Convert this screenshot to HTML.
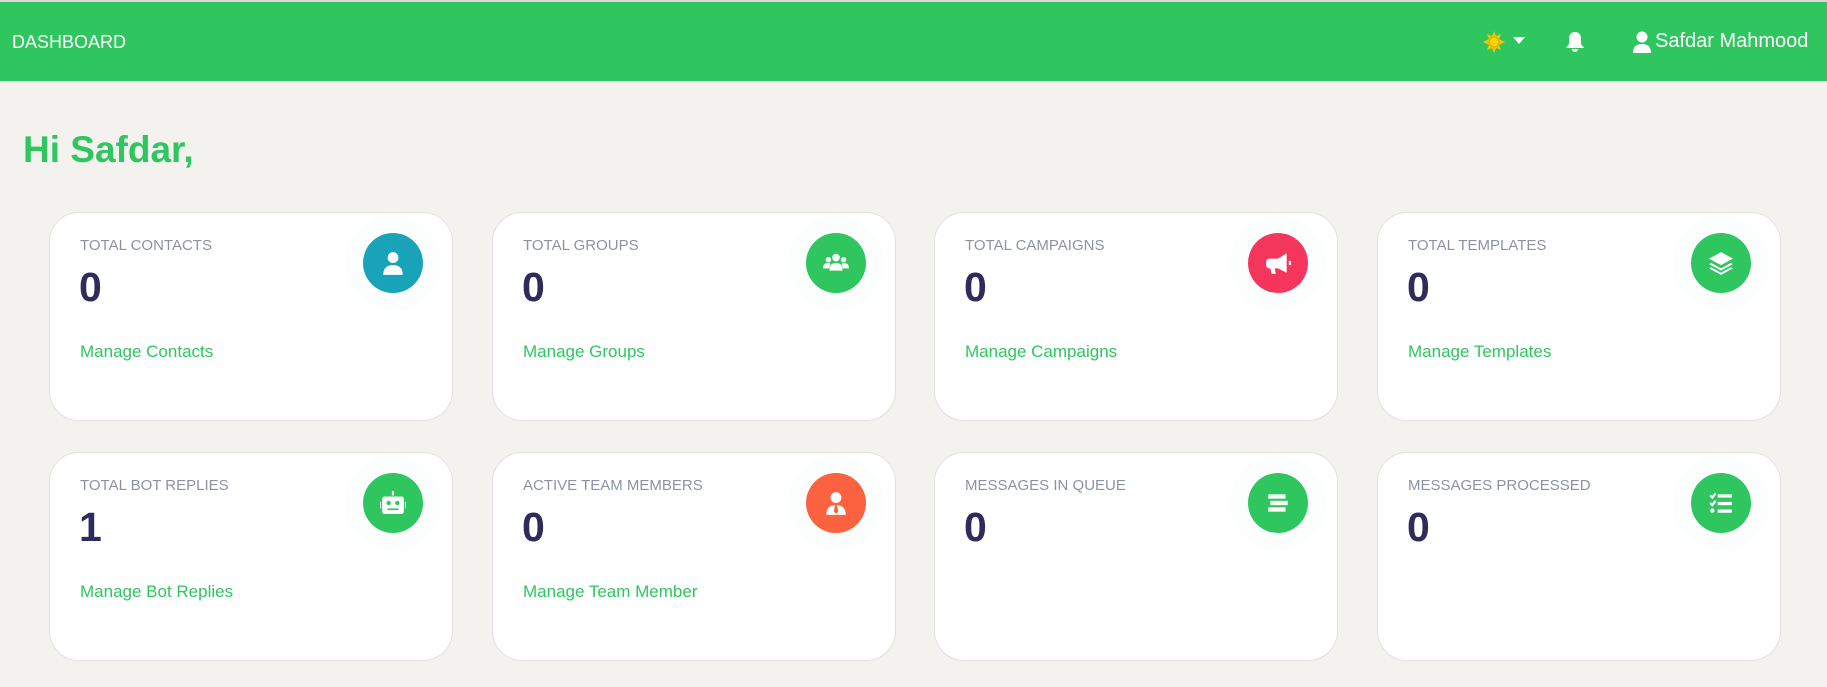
<!DOCTYPE html>
<html><head><meta charset="utf-8"><style>
*{box-sizing:border-box;margin:0;padding:0}
body{width:1827px;height:687px;overflow:hidden;background:#f3f2ef;font-family:"Liberation Sans",sans-serif;position:relative}
.top{position:absolute;left:0;top:0;width:1827px;height:81px;background:#2fc660;border-top:2px solid #d8d8d8}
.dash{position:absolute;left:12px;top:30px;color:#fff;font-size:18px}
.hi{position:absolute;left:23px;top:129px;color:#2fc660;font-size:37px;font-weight:bold}
.card{position:absolute;width:404px;height:209px;background:#fff;border:1px solid #e2e2e2;border-radius:30px}
.lbl{position:absolute;left:30px;top:24px;font-size:15px;color:#8a93a6}
.num{position:absolute;left:29px;top:51px;font-size:41px;font-weight:bold;color:#2e2c5c}
.lnk{position:absolute;left:30px;top:129px;font-size:17px;color:#2fc660}
.ic{position:absolute;left:313px;top:20px;width:60px;height:60px;border-radius:50%;box-shadow:0 0 0 18px rgba(246,248,250,.35);display:flex;align-items:center;justify-content:center}
.ic svg{width:26px;height:26px;fill:#fff}
.r{position:absolute;color:#fff;font-size:20px}
</style></head><body>
<div class="top">
<div class="dash">DASHBOARD</div>
<svg style="position:absolute;left:1482px;top:28px" width="24" height="24" viewBox="0 0 24 24"><polygon points="12,1 14,6 19,4 17,9 23,12 17,15 19,20 14,18 12,23 10,18 5,20 7,15 1,12 7,9 5,4 10,6" fill="#f5c400"/><circle cx="12" cy="12" r="5" fill="#f5d200" stroke="#d9a800"/></svg>
<svg style="position:absolute;left:1513px;top:35px" width="12" height="8"><polygon points="0,0 12,0 6,7" fill="#fff"/></svg>
<svg style="position:absolute;left:1565px;top:29px" width="20" height="22" viewBox="0 0 20 22"><path d="M10 1c-4 0-6 3-6 7v5l-3 4h18l-3-4V8c0-4-2-7-6-7z M7 18a3 3 0 0 0 6 0z" fill="#fff"/></svg>
<svg style="position:absolute;left:1632px;top:29px" width="20" height="22" viewBox="0 0 20 22"><circle cx="10" cy="6" r="5.5" fill="#fff"/><path d="M1 22c0-6 3-9 9-9s9 3 9 9z" fill="#fff"/></svg>
<div class="r" style="left:1655px;top:28px">Safdar Mahmood</div>
</div>
<div class="hi">Hi Safdar,</div>

<div class="card" style="left:49px;top:212px"><div class="lbl">TOTAL CONTACTS</div><div class="num">0</div><div class="lnk">Manage Contacts</div><div class="ic" style="background:#18a3b9"><svg viewBox="0 0 24 24"><circle cx="12" cy="7" r="5"/><path d="M3 23c0-6 3-9 9-9s9 3 9 9z"/></svg></div></div>
<div class="card" style="left:492px;top:212px"><div class="lbl">TOTAL GROUPS</div><div class="num">0</div><div class="lnk">Manage Groups</div><div class="ic" style="background:#2fc660"><svg viewBox="0 0 24 24"><circle cx="12" cy="7" r="3.5"/><circle cx="5" cy="9" r="2.5"/><circle cx="19" cy="9" r="2.5"/><path d="M6 19c0-5 2-7 6-7s6 2 6 7z M0 17c0-4 2-5 5-5 1 0 2 1 2 1-1 1-1 3-1 4z M24 17c0-4-2-5-5-5-1 0-2 1-2 1 1 1 1 3 1 4z"/></svg></div></div>
<div class="card" style="left:934px;top:212px"><div class="lbl">TOTAL CAMPAIGNS</div><div class="num">0</div><div class="lnk">Manage Campaigns</div><div class="ic" style="background:#f5365c"><svg viewBox="0 0 24 24"><path d="M20 3v18l-8-4H9l1 5H6l-1-5H4a3 3 0 0 1-3-3v-3a3 3 0 0 1 3-3h8z M22 10h2v4h-2z"/></svg></div></div>
<div class="card" style="left:1377px;top:212px"><div class="lbl">TOTAL TEMPLATES</div><div class="num">0</div><div class="lnk">Manage Templates</div><div class="ic" style="background:#2fc660"><svg viewBox="0 0 24 24"><path d="M12 2l11 6-11 6L1 8z M3 12l9 5 9-5 2 1-11 6-11-6z M3 16l9 5 9-5 2 1-11 6-11-6z"/></svg></div></div>

<div class="card" style="left:49px;top:452px"><div class="lbl">TOTAL BOT REPLIES</div><div class="num">1</div><div class="lnk">Manage Bot Replies</div><div class="ic" style="background:#2fc660"><svg viewBox="0 0 24 24"><path d="M11 1h2v4h-2z M4 6h16a2 2 0 0 1 2 2v12a2 2 0 0 1-2 2H4a2 2 0 0 1-2-2V8a2 2 0 0 1 2-2z M0 11h1v6H0z M23 11h1v6h-1z"/><circle cx="8" cy="12" r="2" fill="#2fc660"/><circle cx="16" cy="12" r="2" fill="#2fc660"/><rect x="7" y="17" width="10" height="1.5" fill="#2fc660"/></svg></div></div>
<div class="card" style="left:492px;top:452px"><div class="lbl">ACTIVE TEAM MEMBERS</div><div class="num">0</div><div class="lnk">Manage Team Member</div><div class="ic" style="background:#fb6340"><svg viewBox="0 0 24 24"><circle cx="12" cy="7" r="5"/><path d="M3 23c0-6 3-9 9-9s9 3 9 9z"/><path d="M11 14h2l1 6-2 2-2-2z" fill="#fb6340"/></svg></div></div>
<div class="card" style="left:934px;top:452px"><div class="lbl">MESSAGES IN QUEUE</div><div class="num">0</div><div class="ic" style="background:#2fc660"><svg viewBox="0 0 24 24"><rect x="3" y="4" width="16" height="4"/><rect x="5" y="10" width="16" height="4"/><rect x="3" y="16" width="16" height="4"/></svg></div></div>
<div class="card" style="left:1377px;top:452px"><div class="lbl">MESSAGES PROCESSED</div><div class="num">0</div><div class="ic" style="background:#2fc660"><svg viewBox="0 0 24 24"><path d="M2 5l2 2 3-4" stroke="#fff" stroke-width="2" fill="none"/><path d="M2 12l2 2 3-4" stroke="#fff" stroke-width="2" fill="none"/><circle cx="4" cy="19" r="2"/><rect x="9" y="4" width="13" height="3"/><rect x="9" y="11" width="13" height="3"/><rect x="9" y="18" width="13" height="3"/></svg></div></div>
</body></html>
